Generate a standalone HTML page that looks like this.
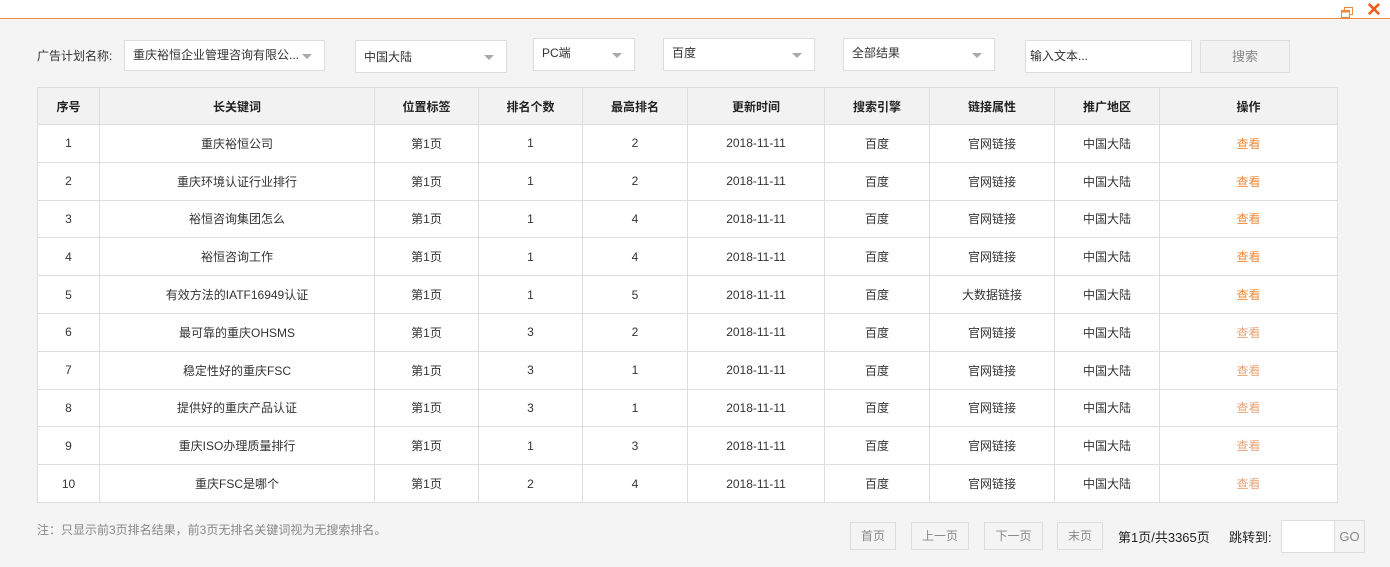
<!DOCTYPE html>
<html><head><meta charset="utf-8"><style>
*{margin:0;padding:0;box-sizing:border-box}
body{width:1390px;height:567px;background:#f4f4f4;font-family:"Liberation Sans","Noto Sans CJK SC",sans-serif;font-size:12px;color:#333;position:relative;overflow:hidden}
.top{position:absolute;left:0;top:0;width:1390px;height:19px;background:#fff;border-bottom:1px solid #f08a3a}
.ab{position:absolute}
.sel{position:absolute;background:#fff;border:1px solid #ddd;padding-left:8px;line-height:28px;white-space:nowrap;overflow:hidden}
.sel:after{content:"";position:absolute;right:12px;top:50%;margin-top:-2px;border-left:5px solid transparent;border-right:5px solid transparent;border-top:5px solid #aaa}
table{position:absolute;left:37px;top:87px;width:1301px;border-collapse:collapse;background:#fff}
td,th{border:1px solid #ddd;text-align:center;font-size:12px;height:37.8px;padding:0}
th{background:#f2f2f2;font-weight:bold;height:37px;color:#222}
.o{color:#f08a3a}.l{color:#e9a377}
.btn{position:absolute;top:522px;height:28px;border:1px solid #ddd;background:#f4f4f4;color:#888;text-align:center;line-height:26px}
</style></head><body>
<div class="top"></div>
<svg class="ab" style="left:1341px;top:7px" width="13" height="12" viewBox="0 0 13 12"><rect x="3.5" y="0.5" width="8" height="7" fill="none" stroke="#f08a3a"/><rect x="0.5" y="3.5" width="8" height="7" fill="#fff" stroke="#f08a3a"/><rect x="0.5" y="3.5" width="8" height="2" fill="#f08a3a"/></svg>
<div class="ab" style="left:1366px;top:1px;color:#f05a1a;font-size:19px;font-weight:bold;line-height:20px">✕</div>
<div class="ab" style="left:37px;top:47px">广告计划名称:</div>
<div class="sel" style="left:124px;top:40px;width:201px;height:31px;padding-right:30px">重庆裕恒企业管理咨询有限公...</div>
<div class="sel" style="left:355px;top:40px;width:152px;height:33px;line-height:32px">中国大陆</div>
<div class="sel" style="left:533px;top:38px;width:102px;height:33px">PC端</div>
<div class="sel" style="left:663px;top:38px;width:152px;height:33px">百度</div>
<div class="sel" style="left:843px;top:38px;width:152px;height:33px">全部结果</div>
<div class="ab" style="left:1025px;top:40px;width:167px;height:33px;background:#fff;border:1px solid #ddd;padding-left:4px;line-height:31px">输入文本...</div>
<div class="ab" style="left:1200px;top:40px;width:90px;height:33px;border:1px solid #ddd;background:#f2f2f2;color:#888;text-align:center;line-height:31px;font-size:13px">搜索</div>
<table>
<tr><th style="width:62px">序号</th><th style="width:275px">长关键词</th><th style="width:104px">位置标签</th><th style="width:104px">排名个数</th><th style="width:105px">最高排名</th><th style="width:137px">更新时间</th><th style="width:105px">搜索引擎</th><th style="width:125px">链接属性</th><th style="width:105px">推广地区</th><th>操作</th></tr>
<tr><td>1</td><td>重庆裕恒公司</td><td>第1页</td><td>1</td><td>2</td><td>2018-11-11</td><td>百度</td><td>官网链接</td><td>中国大陆</td><td class="o">查看</td></tr>
<tr><td>2</td><td>重庆环境认证行业排行</td><td>第1页</td><td>1</td><td>2</td><td>2018-11-11</td><td>百度</td><td>官网链接</td><td>中国大陆</td><td class="o">查看</td></tr>
<tr><td>3</td><td>裕恒咨询集团怎么</td><td>第1页</td><td>1</td><td>4</td><td>2018-11-11</td><td>百度</td><td>官网链接</td><td>中国大陆</td><td class="o">查看</td></tr>
<tr><td>4</td><td>裕恒咨询工作</td><td>第1页</td><td>1</td><td>4</td><td>2018-11-11</td><td>百度</td><td>官网链接</td><td>中国大陆</td><td class="o">查看</td></tr>
<tr><td>5</td><td>有效方法的IATF16949认证</td><td>第1页</td><td>1</td><td>5</td><td>2018-11-11</td><td>百度</td><td>大数据链接</td><td>中国大陆</td><td class="o">查看</td></tr>
<tr><td>6</td><td>最可靠的重庆OHSMS</td><td>第1页</td><td>3</td><td>2</td><td>2018-11-11</td><td>百度</td><td>官网链接</td><td>中国大陆</td><td class="l">查看</td></tr>
<tr><td>7</td><td>稳定性好的重庆FSC</td><td>第1页</td><td>3</td><td>1</td><td>2018-11-11</td><td>百度</td><td>官网链接</td><td>中国大陆</td><td class="l">查看</td></tr>
<tr><td>8</td><td>提供好的重庆产品认证</td><td>第1页</td><td>3</td><td>1</td><td>2018-11-11</td><td>百度</td><td>官网链接</td><td>中国大陆</td><td class="l">查看</td></tr>
<tr><td>9</td><td>重庆ISO办理质量排行</td><td>第1页</td><td>1</td><td>3</td><td>2018-11-11</td><td>百度</td><td>官网链接</td><td>中国大陆</td><td class="l">查看</td></tr>
<tr><td>10</td><td>重庆FSC是哪个</td><td>第1页</td><td>2</td><td>4</td><td>2018-11-11</td><td>百度</td><td>官网链接</td><td>中国大陆</td><td class="l">查看</td></tr>
</table>
<div class="ab" style="left:37px;top:521px;color:#888">注：只显示前3页排名结果，前3页无排名关键词视为无搜索排名。</div>
<div class="btn" style="left:850px;width:46px">首页</div>
<div class="btn" style="left:911px;width:58px">上一页</div>
<div class="btn" style="left:984px;width:59px">下一页</div>
<div class="btn" style="left:1057px;width:46px">末页</div>
<div class="ab" style="left:1118px;top:527px;font-size:13px;color:#222">第1页/共3365页</div>
<div class="ab" style="left:1229px;top:527px;font-size:13px;color:#222">跳转到:</div>
<div class="ab" style="left:1281px;top:520px;width:84px;height:33px;border:1px solid #ddd;background:#fff"></div>
<div class="ab" style="left:1334px;top:520px;width:31px;height:33px;border:1px solid #ddd;background:#f4f4f4;color:#888;text-align:center;line-height:31px;font-size:13px">GO</div>
</body></html>
